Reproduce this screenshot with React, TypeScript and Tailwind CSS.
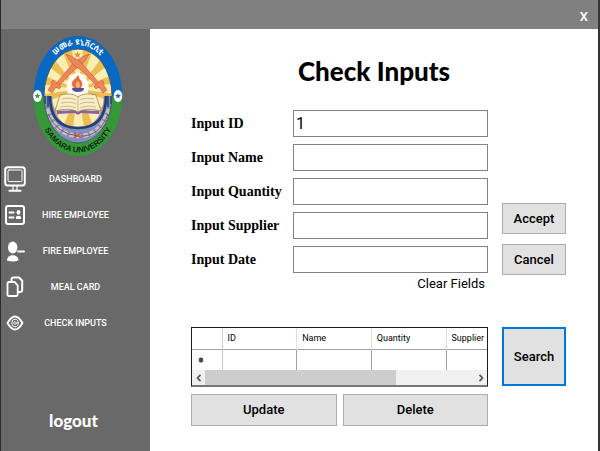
import type { ReactNode } from "react";

const navItems: { label: string; icon: ReactNode }[] = [
  {
    label: "DASHBOARD",
    icon: (
      <>
        <rect x="1.2" y="1.2" width="19.6" height="18.4" rx="2.6" strokeWidth="2" />
        <rect x="4" y="4" width="14" height="11.6" rx="1.2" strokeWidth="1" />
        <path d="M9 20v4M13 20v4" strokeWidth="1.2" />
        <path d="M5.500 24.800h11" strokeWidth="2" />
      </>
    ),
  },
  {
    label: "HIRE EMPLOYEE",
    icon: (
      <>
        <rect x="2" y="4" width="18" height="18" rx="2.2" strokeWidth="2" />
        <path d="M5.500 10.500h4M5.500 15.500h4" strokeWidth="2" />
        <ellipse cx="14.500" cy="10.400" rx="1.900" ry="2.300" fill="white" stroke="none" />
        <path d="M12 17v-2.200q2.500-2 5 0v2.200z" fill="white" stroke="none" />
      </>
    ),
  },
  {
    label: "FIRE EMPLOYEE",
    icon: (
      <>
        <ellipse cx="8.700" cy="9.500" rx="4.700" ry="6" fill="white" stroke="none" />
        <path d="M3 22.500c0-7 11.500-7 11.500 0q-5.700 2-11.500 0z" fill="white" stroke="none" />
        <path d="M14 13.600h6" strokeWidth="2" />
      </>
    ),
  },
  {
    label: "MEAL CARD",
    icon: (
      <>
        <path d="M7.500 8V5.500q0-2 2-2h5.500l3.200 3.200V16q0 2-2 2H14" strokeWidth="2" />
        <path d="M5 8h5.500l3.200 3.300V20.500q0 1.500-1.500 1.500H5q-1.500 0-1.500-1.500V9.500Q3.500 8 5 8z" strokeWidth="1.800" />
      </>
    ),
  },
  {
    label: "CHECK INPUTS",
    icon: (
      <>
        <path d="M3.500 13q7.500-13 15 0q-7.500 13-15 0z" strokeWidth="1.900" />
        <ellipse cx="11" cy="13" rx="3.200" ry="3.800" strokeWidth="1" />
        <circle cx="11" cy="13" r="1.300" strokeWidth="0.800" />
      </>
    ),
  },
];

const fields = [
  { id: "input-id", label: "Input ID", value: "1" },
  { id: "input-name", label: "Input Name", value: "" },
  { id: "input-quantity", label: "Input Quantity", value: "" },
  { id: "input-supplier", label: "Input Supplier", value: "" },
  { id: "input-date", label: "Input Date", value: "" },
];

const buttonClass =
  "border border-[#adadad] bg-[#e1e1e1] font-['Roboto',sans-serif] text-[13px] leading-4 font-medium text-black";

function Star({ x, y, r, fill }: { x: number; y: number; r: number; fill: string }) {
  const points = Array.from({ length: 10 }, (_, i) => {
    const a = (i * Math.PI) / 5 - Math.PI / 2;
    const d = i % 2 ? r * 0.42 : r;
    return `${x + d * Math.cos(a)},${y + d * Math.sin(a)}`;
  }).join(" ");
  return <polygon points={points} fill={fill} />;
}

function Crest() {
  const rays = Array.from({ length: 12 }, (_, i) => {
    const a = (i * Math.PI) / 6 + 0.13;
    const b = a + 0.24;
    return `M45 54L${45 + 70 * Math.cos(a)} ${54 + 70 * Math.sin(a)}L${45 + 70 * Math.cos(b)} ${54 + 70 * Math.sin(b)}z`;
  }).join("");
  return (
    <svg viewBox="0 0 90 122" className="ml-1 h-[122px] w-[90px]" role="img" aria-label="Samara University">
      <defs>
        <clipPath id="disc"><ellipse cx="45" cy="61" rx="34" ry="47" /></clipPath>
        <path id="arc-top" d="M8 61A37 51 0 0 1 82 61" />
        <path id="arc-bottom" d="M3.500 61A41.500 56.500 0 0 0 86.500 61" />
      </defs>
      <path d="M.7 61a44.300 60 0 0 1 88.600 0z" fill="#0869c5" />
      <path d="M.7 61a44.300 60 0 0 0 88.600 0z" fill="#35993a" />
      <g clipPath="url(#disc)">
        <rect width="90" height="122" fill="#fbeeb0" />
        <path d={rays} fill="#ecbd55" />
        <path d="M11 61h8q2 31 26 31t26-31h8v50H11z" fill="#7f8fc0" />
        <path d="M14 74q9 26 31 27t31-27" fill="none" stroke="#d3bcb4" strokeWidth="4.500" strokeDasharray="5 2" />
        <path d="M15 79q9 20 30 22t30-22" fill="none" stroke="#6b5a78" strokeWidth="1" />
        <path d="M17 61q0 32 28 32t28-32" fill="none" stroke="#253e78" strokeWidth="2.500" />
        <path d="M12 61v8M15 61v11M75 61v11M78 61v8" stroke="#263c70" strokeWidth="1.500" />
      </g>
      <ellipse cx="45" cy="61" rx="34" ry="47" fill="none" stroke="#294a55" strokeWidth=".8" />
      <ellipse cx="44.500" cy="52" rx="11" ry="14" fill="#fffaf2" />
      <g fill="#f0845a" stroke="#b64e35" strokeWidth=".5">
        <path d="M56 19Q51 30 41 35L24 53l-3-2L36 33Q44 23 56 19z" />
        <path d="M33 19Q38 30 48 35L66 53l3-2L53 33Q45 23 33 19z" />
        <path d="M20 45l8 7-2 2-3-2-4 6-4-3 4-6-1-2zM69 45l-8 7 2 2 3-2 4 6 4-3-4-6 1-2z" />
      </g>
      <Star x={44.5} y={20} r={3.8} fill="#d8972c" />
      <path d="M41 53q-5-5 2-10l2-3q1 4 4 7 1 4-2 7z" fill="#e66c3c" />
      <path d="M43 52q-1-4 2-6 3 3 1 7z" fill="#f8b46e" />
      <path d="M39 53h12q0 4-6 4t-6-4z" fill="#51509a" />
      <path d="M24 76l21-1 21 1v3l-18-1q-3 3-6 0l-18 1z" fill="#8860ab" />
      <path d="M27 60q12-3 18 2 6-5 18-2l5 16q-15-4-23 1-8-5-23-1z" fill="#f9edc3" stroke="#8b7953" strokeWidth=".7" />
      <path d="M45 62v15M29 64q9-2 14 1M28 68q10-2 15 1M27 72q10-2 16 1M61 64q-9-2-14 1M62 68q-10-2-15 1M63 72q-10-2-16 1" fill="none" stroke="#b3a67e" strokeWidth=".7" />
      <path d="M41 98l7 5M48 98l-7 5" stroke="#c75248" strokeWidth="1.500" />
      <ellipse cx="4.500" cy="61" rx="4.300" ry="6" fill="#fff" />
      <Star x={4.5} y={61} r={3.2} fill="#35993a" />
      <ellipse cx="85" cy="61" rx="4.300" ry="6" fill="#fff" />
      <Star x={85} y={61} r={3.2} fill="#0869c5" />
      <text className="fill-white font-['Noto_Sans_Ethiopic','Noto_Sans',sans-serif] text-[8px] font-bold">
        <textPath href="#arc-top" startOffset="50%" textAnchor="middle">ሠመራ ዩኒቨርሲቲ</textPath>
      </text>
      <text className="fill-[#102a18] font-['Liberation_Sans',sans-serif] text-[8px] font-bold">
        <textPath href="#arc-bottom" startOffset="50%" textAnchor="middle">SAMARA UNIVERSITY</textPath>
      </text>
    </svg>
  );
}

export default function App() {
  return (
    <div className="flex min-h-screen flex-col border-r-2 border-l border-r-[#343434] border-l-[#2b2b2e] bg-white font-['Liberation_Sans',sans-serif] text-black">
      <header className="flex h-[29px] items-end justify-end bg-[#808080] pr-2.5 pb-1">
        <button type="button" aria-label="Close" className="font-['Roboto',sans-serif] text-[13px] leading-4 font-medium text-white">X</button>
      </header>
      <div className="flex flex-1">
        <aside className="flex w-[149px] shrink-0 flex-col items-center bg-[#696969] pt-1.5 pb-5 text-white">
          <Crest />
          <nav className="mt-1 w-full">
            {navItems.map((item) => (
              <button key={item.label} type="button" className="grid h-9 w-full grid-cols-[28px_1fr_28px] items-center px-[3px]">
                <svg viewBox="0 0 22 26" className="h-[26px] w-[22px]" fill="none" stroke="white" strokeLinecap="round" strokeLinejoin="round" aria-hidden="true">
                  {item.icon}
                </svg>
                <span className="text-center font-['Roboto',sans-serif] text-[9px] leading-4 font-medium whitespace-nowrap">{item.label}</span>
              </button>
            ))}
          </nav>
          <button type="button" className="mt-auto pr-1 font-['Lato',sans-serif] text-[17px] leading-5 font-black">logout</button>
        </aside>

        <main className="min-w-0 flex-1">
          <h1 className="pt-6 text-center font-['Lato',sans-serif] text-[26px] leading-9 font-black">Check Inputs</h1>
          <form className="mt-[21px] flex gap-3.5 pr-8 pl-[41px]" onSubmit={(e) => e.preventDefault()}>
            <div className="flex min-w-0 flex-1 flex-col gap-[7px]">
              {fields.map((field) => (
                <div key={field.id} className="flex items-center">
                  <label htmlFor={field.id} className="w-[102px] shrink-0 font-['Liberation_Serif',serif] text-sm leading-5 font-bold whitespace-nowrap">{field.label}</label>
                  <input id={field.id} defaultValue={field.value} className="h-[27px] min-w-0 flex-1 border border-[#828282] bg-white px-0.5 font-['Roboto',sans-serif] text-base outline-none" />
                </div>
              ))}
              <button type="reset" className="-mt-1 self-end pr-[3px] font-['Roboto',sans-serif] text-[13px] leading-4">Clear Fields</button>
            </div>
            <div className="flex w-16 flex-col justify-end gap-2.5 pb-[17px]">
              <button type="submit" className={`${buttonClass} h-[31px]`}>Accept</button>
              <button type="button" className={`${buttonClass} h-[31px]`}>Cancel</button>
            </div>
          </form>

          <section className="mt-[35px] flex items-start gap-3.5 pr-8 pl-[41px]">
            <div className="min-w-0 flex-1">
              <div className="overflow-hidden border border-b-2 border-[#1c1c1c] border-b-[#777]">
                <table className="w-full table-fixed border-collapse font-['Roboto',sans-serif] text-[9px] leading-4">
                  <colgroup>
                    <col className="w-[30px]" />
                    <col />
                    <col />
                    <col />
                    <col className="w-[41px]" />
                  </colgroup>
                  <thead>
                    <tr className="h-[21px] border-b border-[#a0a0a0] text-left">
                      <th className="border-r border-[#d0d0d0] p-0" />
                      <th className="border-r border-[#e0e0e0] pl-[5px] font-normal">ID</th>
                      <th className="border-r border-[#e0e0e0] pl-[5px] font-normal">Name</th>
                      <th className="border-r border-[#e0e0e0] pl-[5px] font-normal">Quantity</th>
                      <th className="pl-[5px] font-normal">Supplier</th>
                    </tr>
                  </thead>
                  <tbody>
                    <tr className="h-[21px]">
                      <td className="border-r border-[#c8c8c8] pl-1.5">
                        <svg viewBox="0 0 6 8" className="h-2 w-1.5" aria-hidden="true"><path d="M3 1.500v5M1 2.500l4 3M5 2.500l-4 3" stroke="#444" strokeWidth="1.600" /></svg>
                      </td>
                      <td className="border-r border-[#a0a0a0]" />
                      <td className="border-r border-[#a0a0a0]" />
                      <td className="border-r border-[#a0a0a0]" />
                      <td />
                    </tr>
                  </tbody>
                </table>
                <div className="flex h-[15px] bg-[#f0f0f0]">
                  <button type="button" aria-label="Scroll left" className="flex w-[13px] items-center justify-center">
                    <svg viewBox="0 0 6 8" className="h-2 w-1.5" fill="none" stroke="#555" strokeWidth="1.700" aria-hidden="true"><path d="M4.500.8L1.500 4l3 3.200" /></svg>
                  </button>
                  <div className="flex-1"><div className="h-full w-[71%] bg-[#cdcdcd]" /></div>
                  <button type="button" aria-label="Scroll right" className="flex w-[13px] items-center justify-center">
                    <svg viewBox="0 0 6 8" className="h-2 w-1.5" fill="none" stroke="#555" strokeWidth="1.700" aria-hidden="true"><path d="M1.500.8l3 3.200-3 3.200" /></svg>
                  </button>
                </div>
              </div>
              <div className="mt-[7px] grid grid-cols-2 gap-1.5">
                <button type="button" className={`${buttonClass} h-8`}>Update</button>
                <button type="button" className={`${buttonClass} h-8`}>Delete</button>
              </div>
            </div>
            <button type="button" className="h-[59px] w-16 border-2 border-[#0078d7] bg-[#e1e1e1] font-['Roboto',sans-serif] text-[13px] leading-4 font-medium">Search</button>
          </section>
        </main>
      </div>
    </div>
  );
}
